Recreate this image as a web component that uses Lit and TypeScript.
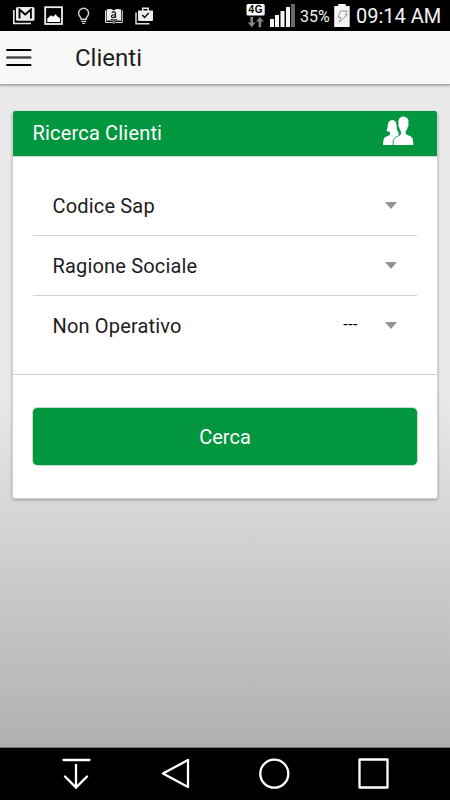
import { LitElement, html, css } from "lit";
import { customElement, property } from "lit/decorators.js";

@customElement("status-bar")
class StatusBar extends LitElement {
  static styles = css`
    :host { display: flex; justify-content: space-between; height: 31px; background: #000; color: #fff; flex: none; }
    svg { display: block; flex: none; }
    .side { display: flex; }
    .pct { width: 32px; padding-left: 4px; font-size: 16px; line-height: 33px; letter-spacing: 0; color: #f2f2f2; white-space: nowrap; }
    .time { width: 94px; font-size: 20px; line-height: 33px; letter-spacing: 0; color: #f4f4f4; white-space: nowrap; }
    .net { font: 700 10px "Liberation Sans", Arial, sans-serif; }
  `;
  render() {
    return html`
      <div class="side">
        <svg width="160" height="31" viewBox="0 0 160 31" fill="none">
          <path d="M13.8 10v13.5H31" stroke="#e8e8e8" stroke-width="1.6" />
          <rect x="16" y="7" width="18.5" height="13.8" rx="1.6" fill="#eee" />
          <path d="M19.5 18.500V9.500l5.700 5 5.700-5v9" stroke="#000" stroke-width="1.900" />
          <rect x="45.200" y="7.200" width="16.800" height="16.800" stroke="#eee" stroke-width="1.800" />
          <path d="M47.300 22v-3.600l3.800-3.200 2 1.600 2.400-2.500 2.400 2.600 2.200 1.100v4z" fill="#fff" />
          <path d="M81.200 19.300c0-2.200-2.600-3-2.600-6a5 5 0 0 1 10 0c0 3-2.500 3.800-2.500 6z" stroke="#ccc" stroke-width="1.500" />
          <path d="M81.200 21.300h4.900M82.200 23.300h3" stroke="#ccc" stroke-width="1.300" />
          <path d="M106.600 9.500c2.500-.8 5-.7 7.200.9 2.200-1.600 4.800-1.700 7.300-.9V21c-2.700-.7-5.100-.5-7.300.8-2.200-1.300-4.600-1.500-7.200-.8z" fill="#eee" />
          <path d="M105.500 10.500v12h6.500l1.800.6 1.800-.6h6.700v-12" stroke="#ddd" stroke-width="1" />
          <path d="M111.800 12.600c.8-1 3.700-1 3.700.7v4.400M115.400 14.600c-5-.2-4.700 3.200-2.200 3 1-.1 2-.8 2.200-1.700M110.800 19.200c2 1.100 4.300 1 6.200 0" stroke="#111" stroke-width="1.200" />
          <path d="M136 12.500v11.200h13.500" stroke="#ddd" stroke-width="1.500" />
          <path d="M138 10.500h15v9.300a1.300 1.300 0 0 1-1.300 1.300h-12.400a1.300 1.300 0 0 1-1.300-1.300z" fill="#eee" />
          <path d="M142.700 11V8.300h5.500V11" stroke="#eee" stroke-width="1.500" />
          <path d="M142.200 15l2.400 2.400 4.100-4.300" stroke="#111" stroke-width="1.500" />
        </svg>
      </div>
      <div class="side">
        <svg width="50" height="31" viewBox="246 0 50 31">
          <rect x="246.500" y="4" width="18.200" height="11.500" rx="1.500" fill="#fff" />
          <text class="net" x="248.600" y="13.400" textLength="14" fill="#000">4G</text>
          <path d="M250.400 17h2.600v5.600h2.700l-4 4.600-4-4.600h2.700zM258.600 27.200h2.600v-5.600h2.700l-4-4.600-4 4.600h2.700z" fill="#858585" />
          <path d="M270 19h4v8h-4zM275 15h4v12h-4zM280.500 11h4v16h-4zM286 7h4v20h-4z" fill="#f4f4f4" />
          <path d="M291 4h4v23h-4z" fill="#666" />
        </svg>
        <div class="pct">35%</div>
        <svg width="24" height="31" viewBox="332 0 24 31">
          <path d="M334.200 6h4V4h7.500v2h4v21h-15.500z" fill="#f4f4f4" />
          <path d="M340.500 11h7l-2.600 3.800h2.500l-8.200 7.500 1.800-5h-3z" fill="none" stroke="#999" stroke-width="1" />
        </svg>
        <div class="time">09:14 AM</div>
      </div>`;
  }
}

@customElement("filter-row")
class FilterRow extends LitElement {
  @property() label = "";
  @property() value = "";
  static styles = css`
    :host { display: flex; align-items: center; height: 59px; padding: 0 20px 0 20px; color: #1c1c1c; }
    .label { flex: 1; font-size: 20px; letter-spacing: 0.17px; }
    .value { font-size: 16px; letter-spacing: 0.5px; margin: 0 27px 2px 0; color: #000; }
    .caret { width: 0; border: 6.5px solid transparent; border-top: 7px solid #949494; border-bottom: 0; }
  `;
  render() {
    return html`<span class="label">${this.label}</span><span class="value">${this.value}</span><span class="caret"></span>`;
  }
}

@customElement("app-root")
class AppRoot extends LitElement {
  static styles = css`
    :host { display: flex; flex-direction: column; width: 450px; height: 800px; overflow: hidden; font-family: Roboto, "Liberation Sans", sans-serif; }
    svg { display: block; flex: none; }
    main { flex: 1; background: linear-gradient(#eaeaea 50%, #b0b0b0); }
    header { display: flex; align-items: center; height: 53px; background: #f8f8f8; border-bottom: 1px solid #aaa; box-shadow: 0 1px 2px rgba(0, 0, 0, 0.3); }
    h1 { margin: 0 0 0 43px; font-size: 24px; font-weight: 400; color: #1d1d1d; letter-spacing: 0; }
    .card { margin: 26px 12px 0 12px; width: 426px; height: 388px; box-sizing: border-box; border: 1px solid #d2d2d2; border-top: 0; border-radius: 3px; background: #fff; box-shadow: 0 1px 3px rgba(0, 0, 0, 0.3); overflow: hidden; }
    .head { display: flex; align-items: center; justify-content: space-between; height: 45px; padding: 0 23px 0 19.5px; background: #02963f; color: #fff; font-size: 20px; letter-spacing: 0.18px; border-bottom: 1px solid #cfd8d0; }
    .head span { padding-bottom: 2px; }
    .head svg { margin-bottom: 6px; }
    .list { padding: 19px 20px 19px 19.5px; border-bottom: 1px solid #d2d2d2; }
    filter-row + filter-row { border-top: 1px solid #d2d2d2; }
    button { display: block; width: 386px; height: 59px; margin: 32px 0 0 19px; padding: 0; border: 1px solid #c5dfc9; border-radius: 5px; background: #02963f; background-clip: padding-box; color: #fff; font: 400 20px Roboto, sans-serif; }
    nav { height: 53px; background: #000; border-top: 1px solid #777; box-sizing: border-box; flex: none; }
  `;
  render() {
    return html`
      <status-bar></status-bar>
      <main>
        <header>
          <svg width="32" height="53" viewBox="0 0 32 53">
            <path d="M6.300 19h25M6.300 34h25" stroke="#000" stroke-width="2" />
            <path d="M6.300 26.500h25" stroke="#444" stroke-width="2.400" />
          </svg>
          <h1>Clienti</h1>
        </header>
        <section class="card">
          <div class="head">
            <span>Ricerca Clienti</span>
            <svg width="31" height="29" viewBox="0 0 31 29" fill="#fff">
              <path d="M9.200 4C6.400 4 5 6.200 4.800 9c-.2 2.600-.6 4.300-1.400 5.700 1 .8 2.200 1 3.500 1v3c-2 1.500-5.300 1.900-6.100 4.300C.2 25 0 27 0 29h10c0-4.500 1-6.500 6-9v-3c-1.700-1.700-2.200-3.500-2.200-5.500C13.700 7 12.500 4 9.200 4z" />
              <path d="M20.800 0l1 1c2.600.4 3.900 2.400 3.700 5.300l-.3 1.700c.7.500.4 2.700-.6 3.300-.3 1.800-1 3-1.900 3.900v2.700c2.300 1.700 5.700 1.800 6.800 4.300.7 1.800.8 4.300.8 6.800H10.200c0-3.300.2-5.500 1.800-6.900 1.700-1.500 4.300-2 5.900-3.800v-3c-.9-1-1.500-2.200-1.800-4-1-.6-1.200-2.800-.5-3.300-.8-4 .6-7 4.200-7.200z" />
              <path d="M15.700 17.500c.3 1 .5 1.400.3 2-2 1.400-4 1.600-5.200 3.700-.8 1.800-.8 3.500-.8 5.800" fill="none" stroke="#02963f" stroke-width=".8" />
              <path d="M14.600 5c-.6 2.500.2 5.500 1.300 8.300" fill="none" stroke="#02963f" stroke-width=".7" />
            </svg>
          </div>
          <div class="list">
            <filter-row label="Codice Sap"></filter-row>
            <filter-row label="Ragione Sociale"></filter-row>
            <filter-row label="Non Operativo" value="---"></filter-row>
          </div>
          <button>Cerca</button>
        </section>
      </main>
      <nav>
        <svg width="450" height="52" viewBox="0 748 450 52" fill="none" stroke="#fff" stroke-width="2.300">
          <path d="M63.500 760h26M76 765v22M65 776.500l11 11 11-11" stroke-linecap="round" />
          <path d="M188 760v27l-25-13.500z" stroke-linejoin="round" />
          <circle cx="274.300" cy="773.700" r="14" />
          <rect x="359.500" y="759.500" width="28" height="28" stroke-linejoin="round" />
        </svg>
      </nav>`;
  }
}
